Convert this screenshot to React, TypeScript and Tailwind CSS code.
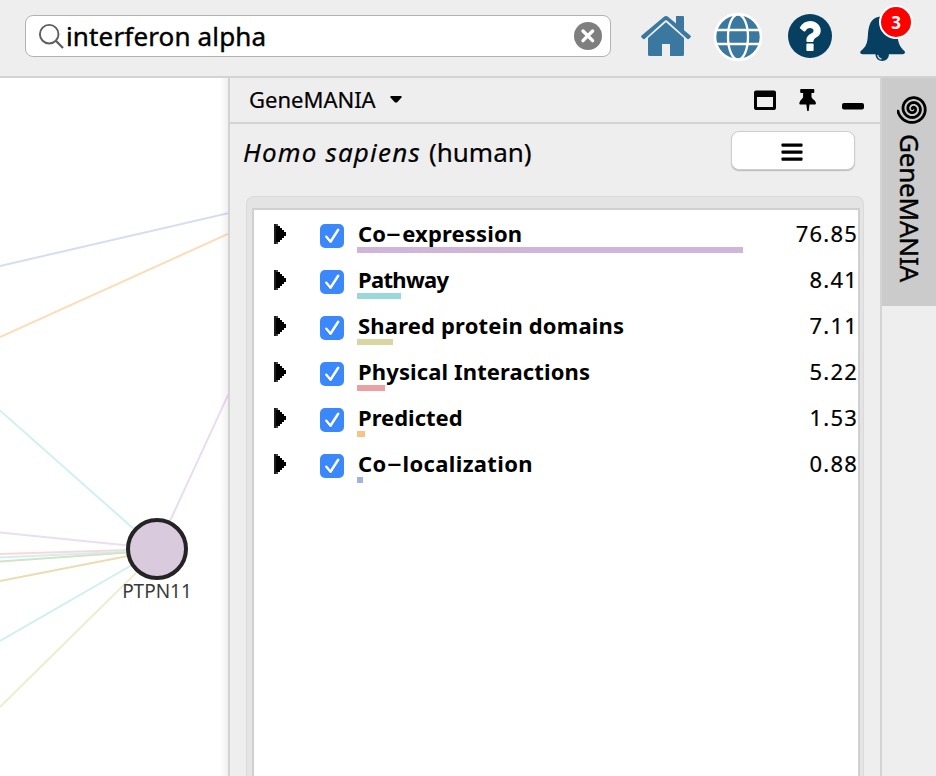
const networks = [
  { prefix: "Co", name: "expression", value: "76.85", bar: "w-[386px] bg-[#cfb5d7]", spacing: "tracking-[0.15px]" },
  { prefix: "", name: "Pathway", value: "8.41", bar: "w-[44px] bg-[#9bd8db]", spacing: "tracking-[-0.7px]" },
  { prefix: "", name: "Shared protein domains", value: "7.11", bar: "w-[36px] bg-[#d9d6a1]", spacing: "tracking-[0.18px]" },
  { prefix: "", name: "Physical Interactions", value: "5.22", bar: "w-[28px] bg-[#eaa1a4]", spacing: "tracking-[0.12px]" },
  { prefix: "", name: "Predicted", value: "1.53", bar: "w-[8px] bg-[#f8c385]", spacing: "tracking-normal" },
  { prefix: "Co", name: "localization", value: "0.88", bar: "w-[6px] bg-[#a1b3dc]", spacing: "tracking-[0.35px]" },
];

const edges = [
  { x1: 0, y1: 266, x2: 229, y2: 213, color: "#d6ddf2" },
  { x1: 0, y1: 337, x2: 229, y2: 233.5, color: "#fcddb8" },
  { x1: 0, y1: 410.5, x2: 135, y2: 530, color: "#d0f0f2" },
  { x1: 229, y1: 393, x2: 170, y2: 521, color: "#eadcef" },
  { x1: 0, y1: 532.5, x2: 128, y2: 545.5, color: "#eadff0" },
  { x1: 0, y1: 554, x2: 128, y2: 550, color: "#f8d9da" },
  { x1: 0, y1: 557.5, x2: 128, y2: 551.5, color: "#d4eef0" },
  { x1: 0, y1: 561.5, x2: 128, y2: 552.5, color: "#d3e2c8" },
  { x1: 0, y1: 581, x2: 128, y2: 556, color: "#eddcb2" },
  { x1: 0, y1: 641, x2: 132, y2: 565, color: "#d0eff2" },
  { x1: 0, y1: 707, x2: 137, y2: 572, color: "#eeedd4" },
];

function SearchIcon() {
  return (
    <svg width="26" height="28" viewBox="38 23 26 28" fill="none" stroke="#5e5e5e" strokeWidth="1.9">
      <circle cx="49.2" cy="35.2" r="9.3" />
      <path d="M55.8 41.8 63 49" strokeWidth="2.3" />
    </svg>
  );
}

function ClearIcon() {
  return (
    <svg width="28" height="28" viewBox="0 0 28 28">
      <circle cx="14" cy="14" r="14" fill="#7f7f7f" />
      <path d="m9 9 9.600 9.600m0-9.600-9.600 9.600" stroke="#fff" strokeWidth="3.4" strokeLinecap="round" />
    </svg>
  );
}

function HomeIcon() {
  return (
    <svg width="50" height="40" viewBox="641 16 50 40" fill="#3a789f">
      <path d="M676 16h7q1 0 1 1v13.2l6.4 5.3q.9.8.2 1.7l-1.5 1.6q-.8.8-1.7.1L667 20.6q-1-.8-2 0l-20.4 18.3q-.9.7-1.7-.1l-1.5-1.6q-.7-.9.2-1.7L663.7 16.9q2.3-1.7 4.600 0L676 23.4z" />
      <path d="M666 22.3 684 38v16.5q0 1.5-1.5 1.5H670V44h-8v12h-12.5q-1.5 0-1.5-1.5V38z" />
    </svg>
  );
}

function GlobeIcon() {
  return (
    <svg width="50" height="50" viewBox="-25 -25 50 50">
      <circle r="24.3" fill="#fff" />
      <circle r="21.7" fill="#3a789f" />
      <g fill="none" stroke="#fff" strokeWidth="2.3">
        <path d="M-22.5-7H22.5M-22.5 7H22.5" />
        <ellipse rx="10" ry="22.5" />
      </g>
    </svg>
  );
}

function HelpIcon() {
  return (
    <svg width="44" height="44" viewBox="788 14 44 44">
      <circle cx="810" cy="36" r="22" fill="#073f61" />
      <path
        fill="#fff"
        transform="translate(797.7 51) scale(.0226 -.0234)"
        d="M704 280v-240q0-16-12-28t-28-12h-240q-16 0-28 12t-12 28v240q0 16 12 28t28 12h240q16 0 28-12t12-28zM1020 880q0-54-15.5-101t-35-76.5t-55-59.5t-57.5-43.5t-61-35.5q-41-23-68.5-65t-27.5-67q0-17-12-32.5t-28-15.5h-240q-15 0-25.5 18.5t-10.5 37.5v45q0 83 65 156.5t143 108.5q59 27 84 56t25 76q0 42-46.5 74t-107.5 32q-65 0-108-29q-35-25-107-115q-13-16-31-16q-12 0-25 8l-164 125q-13 10-15.5 25t5.5 28q160 266 464 266q80 0 161-31t146-83t106-127.5t41-158.5z"
      />
    </svg>
  );
}

function BellIcon() {
  return (
    <svg width="45" height="46" viewBox="860 16 45 46">
      <path
        fill="#073f61"
        d="M861 53.8q-1.5-1.2 0-3c4.500-3.600 6.300-6.800 6.800-14.300C868.5 24 871 18.5 879 16.800q4-.8 8 .2c8 2 9.800 8 10.500 18.500.5 8 2.800 11.500 6.700 15.300q1.600 1.600 0 3-.6.400-1.500.4H862.500q-.9 0-1.500-.4z"
      />
      <path fill="#073f61" d="M875.5 53.5h13.4v1.3a6.700 6.200 0 0 1-13.4 0z" />
      <path d="M877.7 54.8q.5 3.600 4 4.200" fill="none" stroke="#d5dde3" strokeWidth="1.2" />
    </svg>
  );
}

function spiralPath() {
  const points: string[] = [];
  const turns = 2.95;
  for (let i = 0; i <= 180; i++) {
    const t = (i / 180) * turns;
    const r = Math.max(0.7, 14.6 - 4.85 * t + (t < 0.25 ? (0.25 - t) * 2 : 0));
    const a = Math.PI * 0.95 - t * Math.PI * 2;
    points.push(`${(15.9 + r * Math.cos(a)).toFixed(2)} ${(13.8 + r * Math.sin(a)).toFixed(2)}`);
  }
  return "M" + points.join("L");
}

function SpiralIcon() {
  return (
    <svg width="30" height="30" viewBox="0 0 30 30" className="shrink-0">
      <path d={spiralPath()} fill="none" stroke="#000" strokeWidth="2.8" strokeLinecap="round" strokeLinejoin="round" />
    </svg>
  );
}

function NetworkCanvas() {
  return (
    <main className="relative w-[228px] shrink-0 overflow-hidden bg-white">
      <svg width="228" height="698" viewBox="0 78 228 698" className="block">
        {edges.map((e) => (
          <line key={e.y1} x1={e.x1} y1={e.y1} x2={e.x2} y2={e.y2} stroke={e.color} strokeWidth="2" />
        ))}
        <circle cx="157" cy="549" r="29" fill="#dacade" stroke="#242424" strokeWidth="4" />
        <text x="157" y="597.5" textAnchor="middle" fill="#3a3a3a" className="font-['Noto_Sans',sans-serif] text-[19px]">
          PTPN11
        </text>
      </svg>
      <div className="absolute inset-y-0 right-0 w-2 bg-linear-to-r from-transparent to-black/6" />
    </main>
  );
}

export default function App() {
  return (
    <div className="flex h-[776px] w-[936px] flex-col overflow-hidden bg-[#eeeeee] font-['Noto_Sans',sans-serif] text-black">
      <header className="flex h-[78px] shrink-0 border-b-2 border-[#d3d3d3] pl-[25px]">
        <div className="mt-[15px] flex h-[42px] w-[586px] items-center rounded-[8px] border border-[#b2b2b2] bg-white pr-2 pl-3">
          <SearchIcon />
          <span className="ml-[2px] flex-1 text-[26px] leading-10 tracking-[0.15px] [-webkit-text-stroke:0.4px_black]">
            interferon alpha
          </span>
          <ClearIcon />
        </div>
        <div className="mt-4 ml-[30px]">
          <HomeIcon />
        </div>
        <div className="mt-[12px] ml-[22px]">
          <GlobeIcon />
        </div>
        <div className="mt-[14px] ml-[25px]">
          <HelpIcon />
        </div>
        <div className="relative mt-4 ml-7 h-[46px] w-[45px]">
          <BellIcon />
          <span className="absolute -top-[11px] left-[19px] flex size-[34px] items-center justify-center rounded-full border-2 border-white bg-[#fe0000] pt-px text-[17px] font-bold text-white">
            3
          </span>
        </div>
      </header>

      <div className="flex min-h-0 flex-1">
        <NetworkCanvas />

        <section className="flex w-[654px] shrink-0 flex-col border-x-2 border-[#d3d3d3]">
          <div className="flex h-[46px] shrink-0 items-center border-b-2 border-[#d3d3d3] pl-[19px]">
            <h1 className="pb-[2px] text-[22px] leading-[42px] [-webkit-text-stroke:0.2px_black]">GeneMANIA</h1>
            <svg width="12" height="8" viewBox="0 0 12 8" className="mb-[3px] ml-[14px]">
              <path d="M.5 1h11v1.500L7 7.500H5L.5 2.500z" />
            </svg>
            <svg width="112" height="24" viewBox="753 88 112 24" className="mr-[15px] ml-auto">
              <path
                fillRule="evenodd"
                d="M756 90.500h18q2 0 2 2V108q0 2-2 2h-18q-2 0-2-2V92.500q0-2 2-2zM757 97v10h16V97z"
              />
              <path d="M801 89h12.500q.8 0 .8.8v2.200q0 1-1 1h-1.800v3.600q0 1.400 1.100 2.200 3 2 3.400 4.400 0 1.300-1.200 1.300h-5.300l-.8 6.500h-1.500l-.9-6.500h-5.900q-1.300 0-1.100-1.500.5-2.400 2.800-4.200 1-.8 1-2.200V93h-1.800q-1.100 0-1.100-1v-2.200q0-.8.8-.8z" />
              <rect x="842" y="103" width="22" height="6.500" rx="2" />
            </svg>
          </div>

          <div className="flex h-[49px] shrink-0 items-start pt-[7px] pl-[13px]">
            <h2 className="text-[26px] leading-[42px] [-webkit-text-stroke:0.2px_black]">
              <i className="tracking-[1.2px]">Homo sapiens</i>
              <span className="ml-[8px]">(human)</span>
            </h2>
            <button className="mr-[25px] ml-auto flex h-[39px] w-[124px] items-center justify-center rounded-[8px] border border-[#cecece] bg-white pr-[2px] pt-[2px] shadow-[0_1px_1px_#bababa]">
              <svg width="22" height="18" viewBox="0 0 22 18">
                <rect x="0.500" y="0.500" width="21" height="3.300" rx="0.800" />
                <rect x="0.500" y="7.500" width="21" height="3.300" rx="0.800" />
                <rect x="0.500" y="14.500" width="21" height="3.300" rx="0.800" />
              </svg>
            </button>
          </div>

          <div className="mx-4 mt-[23px] flex min-h-0 flex-1 rounded-t-[8px] border border-b-0 border-[#dadada] bg-[#e4e4e4] pt-[11px] pr-[3px] pl-[5px]">
            <ul className="flex-1 border-2 border-b-0 border-[#d0d0d0] bg-white">
              {networks.map((n) => (
                <li key={n.name} className="flex h-[46px] items-start">
                  <svg width="12" height="20" viewBox="0 0 12 20" shapeRendering="crispEdges" className="mt-[14px] ml-5 shrink-0">
                    <path d="M0 0h4v2h2v2h2v4h2v1h2v3h-2v2h-2v2h-2v2h-2v2h-4z" fill="none" />
                    <path d="M0 0h4v2h2v2h2v2h2v2h2v4h-2v2h-2v2h-2v2h-2v2h-4z" />
                    <path fill="#444" d="M2 0h2v2h-2zM2 18h2v2h-2z" />
                    <path fill="#1c1c1c" d="M0 0h2v20h-2z" />
                  </svg>
                  <svg width="24" height="24" viewBox="0 0 24 24" className="mt-[14px] ml-[34px] shrink-0">
                    <rect width="24" height="24" rx="5" fill="#3b88fd" />
                    <path d="m6 13.3 4.300 5.200 8-12.500" fill="none" stroke="#2668cf" strokeWidth="2.6" strokeLinecap="round" strokeLinejoin="round" opacity=".5" />
                    <path d="m6.300 12.800 4.200 4.900 7.700-12" fill="none" stroke="#fff" strokeWidth="2.5" strokeLinecap="round" strokeLinejoin="round" />
                  </svg>
                  <div className="ml-[13px] flex-1 pt-[9px]">
                    <div className={`pl-px text-[22px] leading-[29px] font-bold whitespace-nowrap ${n.spacing}`}>
                      {n.prefix}
                      {n.prefix && <span className="inline-block w-4 origin-left scale-x-[2.1] scale-y-[0.8]">-</span>}
                      {n.name}
                    </div>
                    <div className={`relative -mt-px h-[6px] ${n.bar}`} />
                  </div>
                  <span className="pt-[9px] text-[22px] leading-[29px] tracking-[1.2px] [-webkit-text-stroke:0.2px_black]">{n.value}</span>
                </li>
              ))}
            </ul>
          </div>
        </section>

        <aside className="flex h-[228px] flex-1 flex-col items-center bg-[#cbcbcb] pt-[17px]">
          <div className="ml-[5px]">
            <SpiralIcon />
          </div>
          <span className="mt-[9px] ml-[2px] text-[26px] leading-[36px] tracking-[-0.2px] [-webkit-text-stroke:0.4px_black] [writing-mode:vertical-rl]">
            GeneMANIA
          </span>
        </aside>
      </div>
    </div>
  );
}
